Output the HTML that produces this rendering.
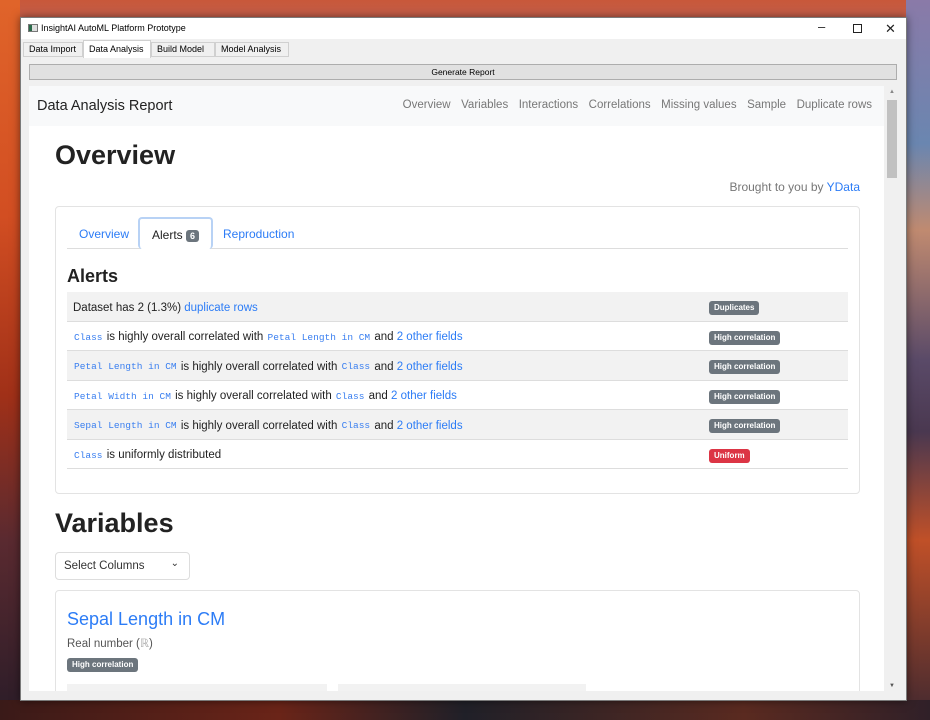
<!DOCTYPE html>
<html><head><meta charset="utf-8"><style>
*{box-sizing:border-box;margin:0;padding:0}
body{width:930px;height:720px;overflow:hidden;position:relative;font-family:"Liberation Sans",sans-serif;
background:linear-gradient(180deg,#c8583a 0%,#b86a6e 8%,#7a6f93 20%,#4f5a78 45%,#6a3a3a 70%,#c0401e 85%,#3a2430 100%);}
.bgL{position:absolute;left:0;top:0;width:20px;height:720px;background:linear-gradient(180deg,#e0642a 0%,#d24e22 30%,#a03018 55%,#5a2a30 75%,#2a1c28 100%)}
.bgR{position:absolute;right:0;top:0;width:24px;height:720px;background:linear-gradient(180deg,#8a7aa8 0%,#6a86b0 20%,#c08a70 32%,#5a4a68 50%,#4a3850 60%,#c05028 75%,#402830 100%)}
.bgB{position:absolute;left:0;bottom:0;width:930px;height:20px;background:linear-gradient(90deg,#3a1a18,#6a2418 30%,#202028 50%,#5a2a20 80%,#302028)}
.win{position:absolute;left:20px;top:17px;width:887px;height:684px;background:#f0f0f0;border:1px solid #7a7a7a;box-shadow:0 0 8px rgba(0,0,0,.5)}
.title{height:21px;background:#fff;font-size:9px;line-height:21px;padding-left:20px;color:#000;position:relative}
.title .ic{position:absolute;left:7px;top:6px;width:10px;height:8px;border:1px solid #777;background:linear-gradient(90deg,#2a6a4a 40%,#ddd 40%)}
.ctl{position:absolute;top:0;font-size:13px;color:#222}
.tabs{position:absolute;top:22px;left:0;height:17px;font-size:9px;white-space:nowrap}
.tab{position:absolute;top:2px;height:15px;border:1px solid #d0d0d0;background:#f0f0f0;line-height:13px;padding:0 5px;white-space:nowrap;overflow:hidden}
.tab.a{top:0;height:18px;background:#fff;border-bottom:none;line-height:17px}
.btn{position:absolute;left:8px;top:46px;width:868px;height:16px;background:#e1e1e1;border:1px solid #adadad;font-size:8.5px;text-align:center;line-height:14px}
.rep{position:absolute;left:8px;top:68px;width:855px;height:605px;background:#fff;overflow:hidden}
.nav{height:40px;background:#f8f9fa;position:relative}
.nav .brand{position:absolute;left:8px;top:12px;font-size:14.5px;color:#222}
.nav .links{position:absolute;right:12px;top:13px;font-size:11.5px;color:#777;white-space:nowrap}
.nav .links span{margin-left:10.5px}
.sb{position:absolute;left:865px;top:68px;width:12px;height:605px;background:#f0f0f0}
.sb .th{position:absolute;left:1px;top:14px;width:10px;height:78px;background:#c1c1c1}
a,.lk{color:#2c7cf6;text-decoration:none}
code{font-family:"Liberation Mono",monospace;font-size:9.5px;color:#3a7ff0;margin:0 1px}
.badge{display:inline-block;background:#6c757d;color:#fff;font-size:8px;font-weight:bold;border-radius:3px;padding:2px 5px;line-height:10px}
.card{position:absolute;border:1px solid #e3e3e3;border-radius:4px;background:#fff}
.row{position:absolute;left:11px;width:781px;height:29.5px;font-size:11.5px;padding:3px 0 0 6px;color:#222;border-bottom:1px solid #ddd;display:flex;align-items:center;white-space:pre}
.row.g{background:#f2f2f2}
.row .badge{position:absolute;left:642px;top:9px}
</style></head><body>
<div class="bgL"></div><div class="bgR"></div><div class="bgB"></div>
<div class="win">
 <div class="title"><div class="ic"></div>InsightAI AutoML Platform Prototype
  <span class="ctl" style="left:797px;top:-2px">–</span><span class="ctl" style="left:832px;top:6px;width:9px;height:9px;border:1px solid #222"></span><span class="ctl" style="left:864px;top:0">✕</span></div>
 <div class="tabs">
  <div class="tab" style="left:2px;width:60px">Data Import</div>
  <div class="tab a" style="left:62px;width:68px">Data Analysis</div>
  <div class="tab" style="left:130px;width:64px">Build Model</div>
  <div class="tab" style="left:194px;width:74px">Model Analysis</div>
 </div>
 <div class="btn">Generate Report</div>
 <div class="rep">
  <div class="nav"><div class="brand">Data Analysis Report</div>
   <div class="links"><span>Overview</span><span>Variables</span><span>Interactions</span><span>Correlations</span><span>Missing values</span><span>Sample</span><span>Duplicate rows</span></div></div>
  <div style="position:absolute;left:26px;top:54px;font-size:27px;font-weight:bold;color:#222">Overview</div>
  <div style="position:absolute;right:24px;top:94px;font-size:12px;color:#777">Brought to you by <a>YData</a></div>
  <div class="card" style="left:26px;top:120px;width:805px;height:288px">
   <div style="position:absolute;left:11px;top:41px;width:781px;border-top:1px solid #ddd"></div>
   <div style="position:absolute;left:23px;top:20px;font-size:12px" class="lk">Overview</div>
   <div style="position:absolute;left:82px;top:10px;width:75px;height:32px;border:2px solid #b8d2f5;border-radius:4px;border-bottom:none;background:#fff;font-size:12px;padding:9px 0 0 12px;color:#222">Alerts <span class="badge" style="font-size:9px;padding:1px 4px">6</span></div>
   <div style="position:absolute;left:167px;top:20px;font-size:12px" class="lk">Reproduction</div>
   <div style="position:absolute;left:11px;top:59px;font-size:18px;font-weight:bold;color:#222">Alerts</div>
   <div class="row g" style="top:85px">Dataset has 2 (1.3%) <a>duplicate rows</a><span class="badge">Duplicates</span></div>
   <div class="row" style="top:114.5px"><code>Class</code> is highly overall correlated with <code>Petal Length in CM</code> and <a>2 other fields</a><span class="badge">High correlation</span></div>
   <div class="row g" style="top:144px"><code>Petal Length in CM</code> is highly overall correlated with <code>Class</code> and <a>2 other fields</a><span class="badge">High correlation</span></div>
   <div class="row" style="top:173.5px"><code>Petal Width in CM</code> is highly overall correlated with <code>Class</code> and <a>2 other fields</a><span class="badge">High correlation</span></div>
   <div class="row g" style="top:203px"><code>Sepal Length in CM</code> is highly overall correlated with <code>Class</code> and <a>2 other fields</a><span class="badge">High correlation</span></div>
   <div class="row" style="top:232.5px"><code>Class</code> is uniformly distributed<span class="badge" style="background:#dc3545">Uniform</span></div>
  </div>
  <div style="position:absolute;left:26px;top:422px;font-size:27px;font-weight:bold;color:#222">Variables</div>
  <div style="position:absolute;left:26px;top:466px;width:135px;height:28px;border:1px solid #ddd;border-radius:4px;font-size:11.5px;color:#333;padding:7px 0 0 8px">Select Columns<span style="position:absolute;right:10px;top:5px;font-size:10px">⌄</span></div>
  <div class="card" style="left:26px;top:504px;width:805px;height:120px">
   <div style="position:absolute;left:11px;top:18px;font-size:18px" class="lk">Sepal Length in CM</div>
   <div style="position:absolute;left:11px;top:45px;font-size:11.5px;color:#555">Real number (<span style="color:#aaa">ℝ</span>)</div>
   <span class="badge" style="position:absolute;left:11px;top:67px">High correlation</span>
   <div style="position:absolute;left:11px;top:93px;width:260px;height:20px;background:#f2f2f2"></div>
   <div style="position:absolute;left:282px;top:93px;width:248px;height:20px;background:#f2f2f2"></div>
  </div>
 </div>
 <div class="sb"><div style="position:absolute;left:3px;top:3px;font-size:6px;color:#888">▲</div><div class="th"></div><div style="position:absolute;left:3px;bottom:2px;font-size:6px;color:#555">▼</div></div>
</div>
</body></html>
